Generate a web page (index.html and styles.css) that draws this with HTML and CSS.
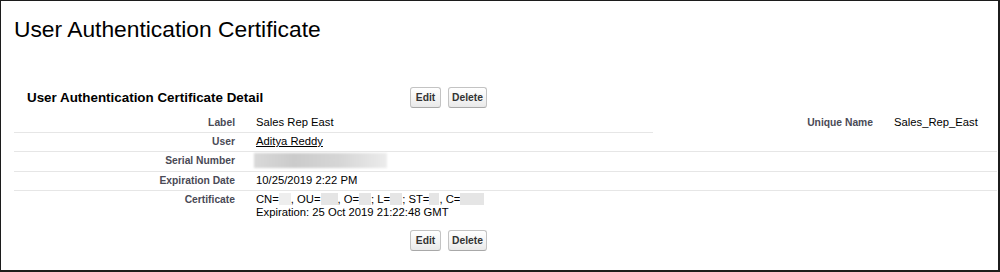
FILE: index.html
```html
<!DOCTYPE html>
<html lang="en">
<head>
<meta charset="utf-8">
<title>User Authentication Certificate</title>
<link rel="stylesheet" href="styles.css">
</head>
<body>
<div class="frame">
  <h1 class="page-title">User Authentication Certificate</h1>
  <div class="block">
    <div class="block-header">
      <h2 class="block-title">User Authentication Certificate Detail</h2>
      <div class="btns">
        <button class="btn btn-edit">Edit</button>
        <button class="btn btn-delete">Delete</button>
      </div>
    </div>
    <div class="detail">
      <div class="lbl line">Label</div>
      <div class="val line">Sales Rep East</div>
      <div class="lbl">Unique Name</div>
      <div class="val">Sales_Rep_East</div>

      <div class="lbl line">User</div>
      <div class="val line wide"><a class="link" href="#">Aditya Reddy</a></div>

      <div class="lbl line">Serial Number</div>
      <div class="val line wide"><span class="blur-serial"></span></div>

      <div class="lbl line">Expiration Date</div>
      <div class="val line wide">10/25/2019 2:22 PM</div>

      <div class="lbl">Certificate</div>
      <div class="val wide">CN=<span class="mask m1"></span>, OU=<span class="mask m2"></span>, O=<span class="mask m3"></span>; L=<span class="mask m3"></span>; ST=<span class="mask m4"></span>, C=<span class="mask m5"></span><br>Expiration: 25 Oct 2019 21:22:48 GMT</div>
    </div>
    <div class="block-footer btns">
      <button class="btn btn-edit">Edit</button>
      <button class="btn btn-delete">Delete</button>
    </div>
  </div>
</div>
</body>
</html>
```

FILE: styles.css
```css
html, body {
  margin: 0;
  padding: 0;
  background: #fff;
}

body {
  font-family: "Liberation Sans", Arial, Helvetica, sans-serif;
  color: #000;
}

.frame {
  box-sizing: border-box;
  width: 1000px;
  height: 272px;
  border-style: solid;
  border-color: #1c1c1c;
  border-width: 1px 2px 2px 1px;
  background: #fff;
  overflow: hidden;
}

.page-title {
  margin: 15px 0 0 13px;
  font-size: 22.8px;
  line-height: 26px;
  font-weight: normal;
  color: #000;
}

.block {
  margin: 45px 1px 0 13px;
}

.block-header {
  display: grid;
  grid-template-columns: 396px auto;
  align-items: center;
  height: 21px;
}

.block-title {
  margin: 0 0 0 13px;
  font-size: 13.4px;
  line-height: 21px;
  font-weight: bold;
  color: #000;
}

.btns {
  display: flex;
  gap: 7px;
}

.btn {
  box-sizing: border-box;
  height: 21px;
  padding: 0;
  border: 1px solid #c3c3c3;
  border-bottom-color: #a8a8a8;
  border-radius: 3px;
  background: linear-gradient(#ffffff, #f3f3f3 60%, #e9e9e9);
  font-family: "Liberation Sans", Arial, Helvetica, sans-serif;
  font-size: 10.3px;
  font-weight: bold;
  color: #333;
  text-align: center;
}

.btn-edit {
  width: 31px;
}

.btn-delete {
  width: 39px;
}

.detail {
  display: grid;
  grid-template-columns: 231px 408px 230px 114px;
  margin-top: 6px;
}

.lbl,
.val {
  padding: 2px 0 3px;
  line-height: 13px;
  min-height: 13px;
}

.line {
  border-bottom: 1px solid #e6e6e6;
}

.lbl {
  padding-right: 10px;
  text-align: right;
  font-size: 10.3px;
  font-weight: bold;
  color: #4a4a56;
}

.val {
  padding-left: 11px;
  font-size: 11.25px;
  color: #000;
  white-space: nowrap;
}

.val.wide {
  grid-column: span 3;
}

.link {
  color: #000;
  text-decoration: underline;
}

.blur-serial {
  display: inline-block;
  vertical-align: top;
  width: 133px;
  height: 15px;
  margin: -1px 0 0 -2px;
  background: linear-gradient(90deg, #d9d9d9, #cbcbcb 30%, #d6d6d6 65%, #ececec);
  filter: blur(0.8px);
}

.mask {
  display: inline-block;
  vertical-align: -2px;
  height: 12px;
  background: #e5e5e5;
  filter: blur(0.5px);
}

.m1 { width: 12px; background: #eeeeee; }
.m2 { width: 17px; }
.m3 { width: 12px; }
.m4 { width: 10px; }
.m5 { width: 24px; }

.block-footer {
  margin: 8px 0 0 396px;
}
```
